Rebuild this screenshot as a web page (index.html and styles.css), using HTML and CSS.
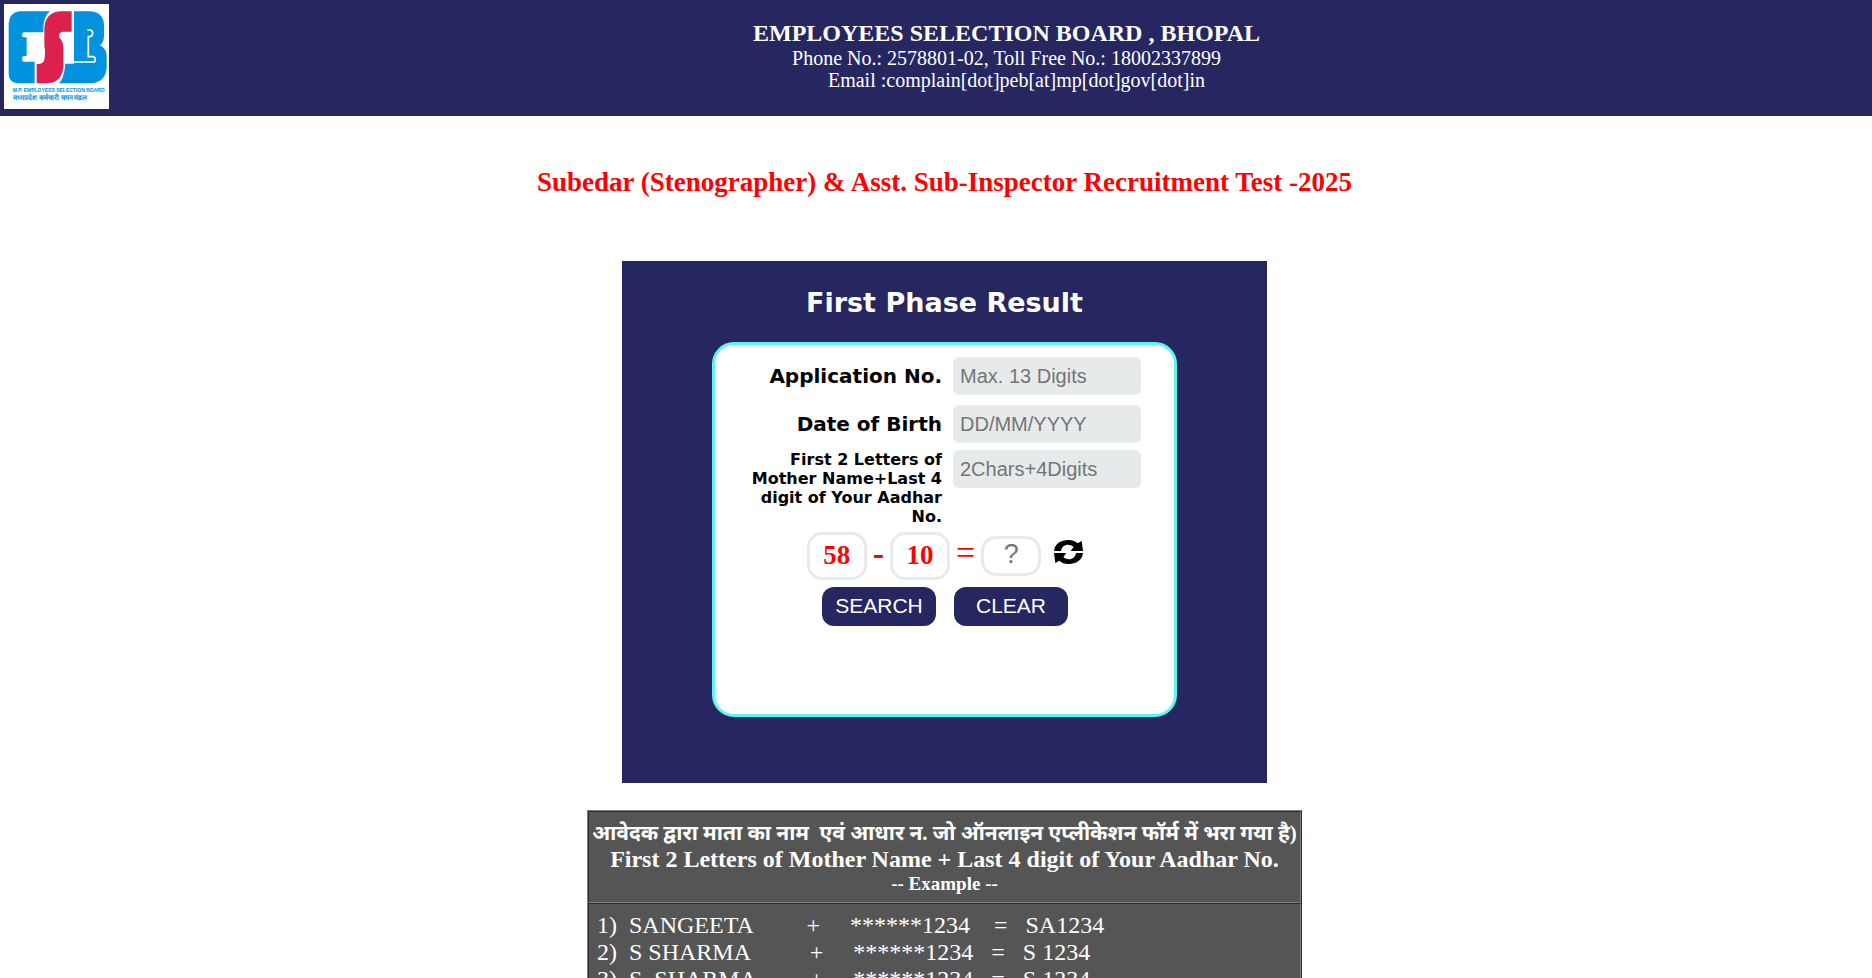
FILE: index.html
```
<!DOCTYPE html>
<html lang="en">
  <head>
    <meta charset="UTF-8" />
    <meta name="viewport" content="width=device-width, initial-scale=1.0" />
    <title>First Phase Result</title>
    <link rel="stylesheet" href="styles.css">
  </head>
  <body>
    <header class="header">
      <svg class="logo" viewBox="12 12 315 315" role="img" aria-label="ESB logo">
        <rect x="12" y="12" width="315" height="315" fill="#fff" />
        <!-- E -->
        <path fill="#0393de" d="M58 34H150C134 48 130 66 130 97H72Q66 98 66 105Q66 112 72 112H80V168H72Q66 169 66 176Q66 184 72 185H104V250H54Q27 248 26 222V70Q28 38 58 34Z" />
        <!-- S -->
        <path fill="#dc214e" d="M215 34V95H190C176 96 174 108 182 118Q190 128 190 142V200Q186 248 140 250H110V192H118Q134 190 134 172L135 160Q136 150 133 138V84Q136 38 180 34Z" />
        <!-- B -->
        <path fill="#0393de" d="M222 34H272Q311 38 312 76V108Q312 126 300 136Q320 146 320 170V204Q316 248 272 250H176Q192 238 196 191H222Z" />
        <path class="logo-line" d="M262 90H271Q278 91 278 100Q278 109 270 110H265V170H279Q286 171 286 179Q286 186 279 186H196" />
        <text class="logo-text" x="38" y="275">M.P. EMPLOYEES SELECTION BOARD</text>
        <text class="logo-text logo-hindi" x="38" y="299" lang="hi">मध्यप्रदेश कर्मचारी चयन मंडल</text>
      </svg>
      <div class="header-text">
        <h1>EMPLOYEES SELECTION BOARD , BHOPAL</h1>
        <p>Phone No.: 2578801-02, Toll Free No.: 18002337899</p>
        <p class="email">Email :complain[dot]peb[at]mp[dot]gov[dot]in</p>
      </div>
    </header>

    <main class="content">
      <h2 class="test-name">Subedar (Stenographer) &amp; Asst. Sub-Inspector Recruitment Test -2025</h2>

      <section class="panel">
        <h3>First Phase Result</h3>
        <form class="box">
          <div class="row">
            <label for="appNo">Application No.</label>
            <input type="text" id="appNo" maxlength="13" placeholder="Max. 13 Digits" />
          </div>
          <div class="row">
            <label for="dob">Date of Birth</label>
            <input type="text" id="dob" placeholder="DD/MM/YYYY" />
          </div>
          <div class="row row-small">
            <label for="code">First 2 Letters of Mother Name+Last 4 digit of Your Aadhar No.</label>
            <input type="text" id="code" maxlength="6" placeholder="2Chars+4Digits" />
          </div>

          <div class="captcha">
            <span class="num">58</span>
            <span class="sign">-</span>
            <span class="num">10</span>
            <span class="sign equals">=</span>
            <input type="text" class="answer" placeholder="?" aria-label="Answer" />
            <button type="button" class="refresh" aria-label="Refresh">
              <svg viewBox="0 0 87 72">
                <path d="M0 33C3 10 21 0 43 0C56 0 65 4 71 10L83 3L87 33H50L59 21C46 9 24 13 21 33Z" />
                <path d="M0 33C3 10 21 0 43 0C56 0 65 4 71 10L83 3L87 33H50L59 21C46 9 24 13 21 33Z" transform="rotate(180 43.5 36)" />
              </svg>
            </button>
          </div>

          <div class="buttons">
            <button type="submit">SEARCH</button>
            <button type="reset">CLEAR</button>
          </div>
        </form>
      </section>

      <table class="example">
        <thead>
          <tr>
            <th>
              <div class="hindi" lang="hi">आवेदक द्वारा माता का नाम&nbsp; एवं आधार न. जो ऑनलाइन एप्लीकेशन फॉर्म में भरा गया है)</div>
              <div>First 2 Letters of Mother Name + Last 4 digit of Your Aadhar No.</div>
              <div class="small">-- Example --</div>
            </th>
          </tr>
        </thead>
        <tbody>
          <tr>
            <td>1)  SANGEETA         +     ******1234    =   SA1234
2)  S SHARMA          +     ******1234   =   S 1234
3)  S. SHARMA         +     ******1234   =   S 1234</td>
          </tr>
        </tbody>
      </table>
    </main>
  </body>
</html>
```
FILE: styles.css
```
body {
  margin: 0;
  font-family: "Liberation Serif", "Noto Sans", serif;
  background: #fff;
  color: #000;
}

h1,
h2,
h3,
p {
  margin: 0;
}

.header {
  display: flex;
  height: 116px;
  box-sizing: border-box;
  padding: 4px;
  background: #262760;
  color: #fff;
}

.logo {
  width: 105px;
  height: 105px;
  margin-right: 36px;
}

.logo-line {
  fill: none;
  stroke: #fff;
  stroke-width: 5;
}

.logo-text {
  font: bold 15px "Liberation Sans", sans-serif;
  fill: #0393de;
}

.logo-hindi {
  font-size: 21px;
}

.header-text {
  flex: 1;
  padding-top: 15px;
  text-align: center;
}

.header-text h1 {
  font-size: 24px;
  line-height: 28px;
}

.header-text p {
  font-size: 20px;
  line-height: 22px;
}

.header-text .email {
  padding-left: 20px;
}

.content {
  display: flex;
  flex-direction: column;
  align-items: center;
  padding-left: 17px;
}

.test-name {
  margin: 50px 0 62px;
  font-size: 27px;
  line-height: 33px;
  color: #f00;
}

.panel {
  width: 645px;
  box-sizing: border-box;
  padding: 25px 90px 66px;
  background: #262760;
}

.panel h3 {
  margin-bottom: 23px;
  font: bold 27px/33px Verdana, "DejaVu Sans", sans-serif;
  text-align: center;
  color: #fff;
}

.box {
  box-sizing: border-box;
  min-height: 375px;
  padding: 12px 31px 12px 32px;
  background: #fff;
  border: 3px solid #5cf5f2;
  border-radius: 22px;
}

.row {
  display: flex;
  gap: 11px;
  margin-bottom: 10px;
  padding-right: 2px;
}

.row label {
  flex: 1;
  font: bold 20px/38px Verdana, "DejaVu Sans", sans-serif;
  text-align: right;
}

.row-small {
  margin: -3px 0 6px;
}

.row-small label {
  font-size: 16px;
  line-height: 19px;
}

.row input {
  width: 188px;
  height: 38px;
  box-sizing: border-box;
  padding: 0 7px;
  border: none;
  border-radius: 6px;
  background: #e6eaea;
  font: 20px "Liberation Sans", sans-serif;
}

.captcha {
  display: flex;
  align-items: center;
  justify-content: center;
  gap: 6px;
  font-size: 27px;
  font-weight: bold;
  color: #f00;
}

.num,
.answer {
  width: 60px;
  height: 48px;
  box-sizing: border-box;
  border: 3px solid #e6eaea;
  border-radius: 15px;
  text-align: center;
  line-height: 40px;
}

.sign {
  padding-bottom: 4px;
  font-size: 34px;
  line-height: 40px;
}

.equals {
  padding-bottom: 6px;
  font-weight: normal;
}

.answer {
  height: 40px;
  padding: 0 0 4px;
  font: 27px "Liberation Sans", sans-serif;
}

.refresh {
  margin-left: 7px;
  padding: 0 0 9px;
  border: none;
  background: none;
  cursor: pointer;
}

.refresh svg {
  display: block;
  width: 29px;
  height: 24px;
}

.buttons {
  display: flex;
  justify-content: center;
  gap: 18px;
  margin-top: 7px;
}

.buttons button {
  width: 114px;
  height: 39px;
  padding: 0 0 2px;
  border: none;
  border-radius: 12px;
  background: #262760;
  color: #fff;
  font: 21px "Liberation Sans", sans-serif;
  cursor: pointer;
}

.example {
  width: 715px;
  margin: 27px 0;
  border: 1px solid;
  border-color: #808080 #2c2c2c #2c2c2c #808080;
  border-spacing: 0;
  background: #555;
  color: #fff;
  font-size: 24px;
  line-height: 27px;
}

.example th,
.example td {
  padding: 8px;
  border: 1px solid;
  border-color: #2c2c2c #808080 #808080 #2c2c2c;
}

.example th {
  padding: 8px 2px 7px;
}

.example td {
  white-space: pre;
}

.example .hindi {
  font-size: 21px;
  line-height: 26px;
  white-space: nowrap;
}

.example .small {
  font-size: 19px;
  line-height: 22px;
}
```
